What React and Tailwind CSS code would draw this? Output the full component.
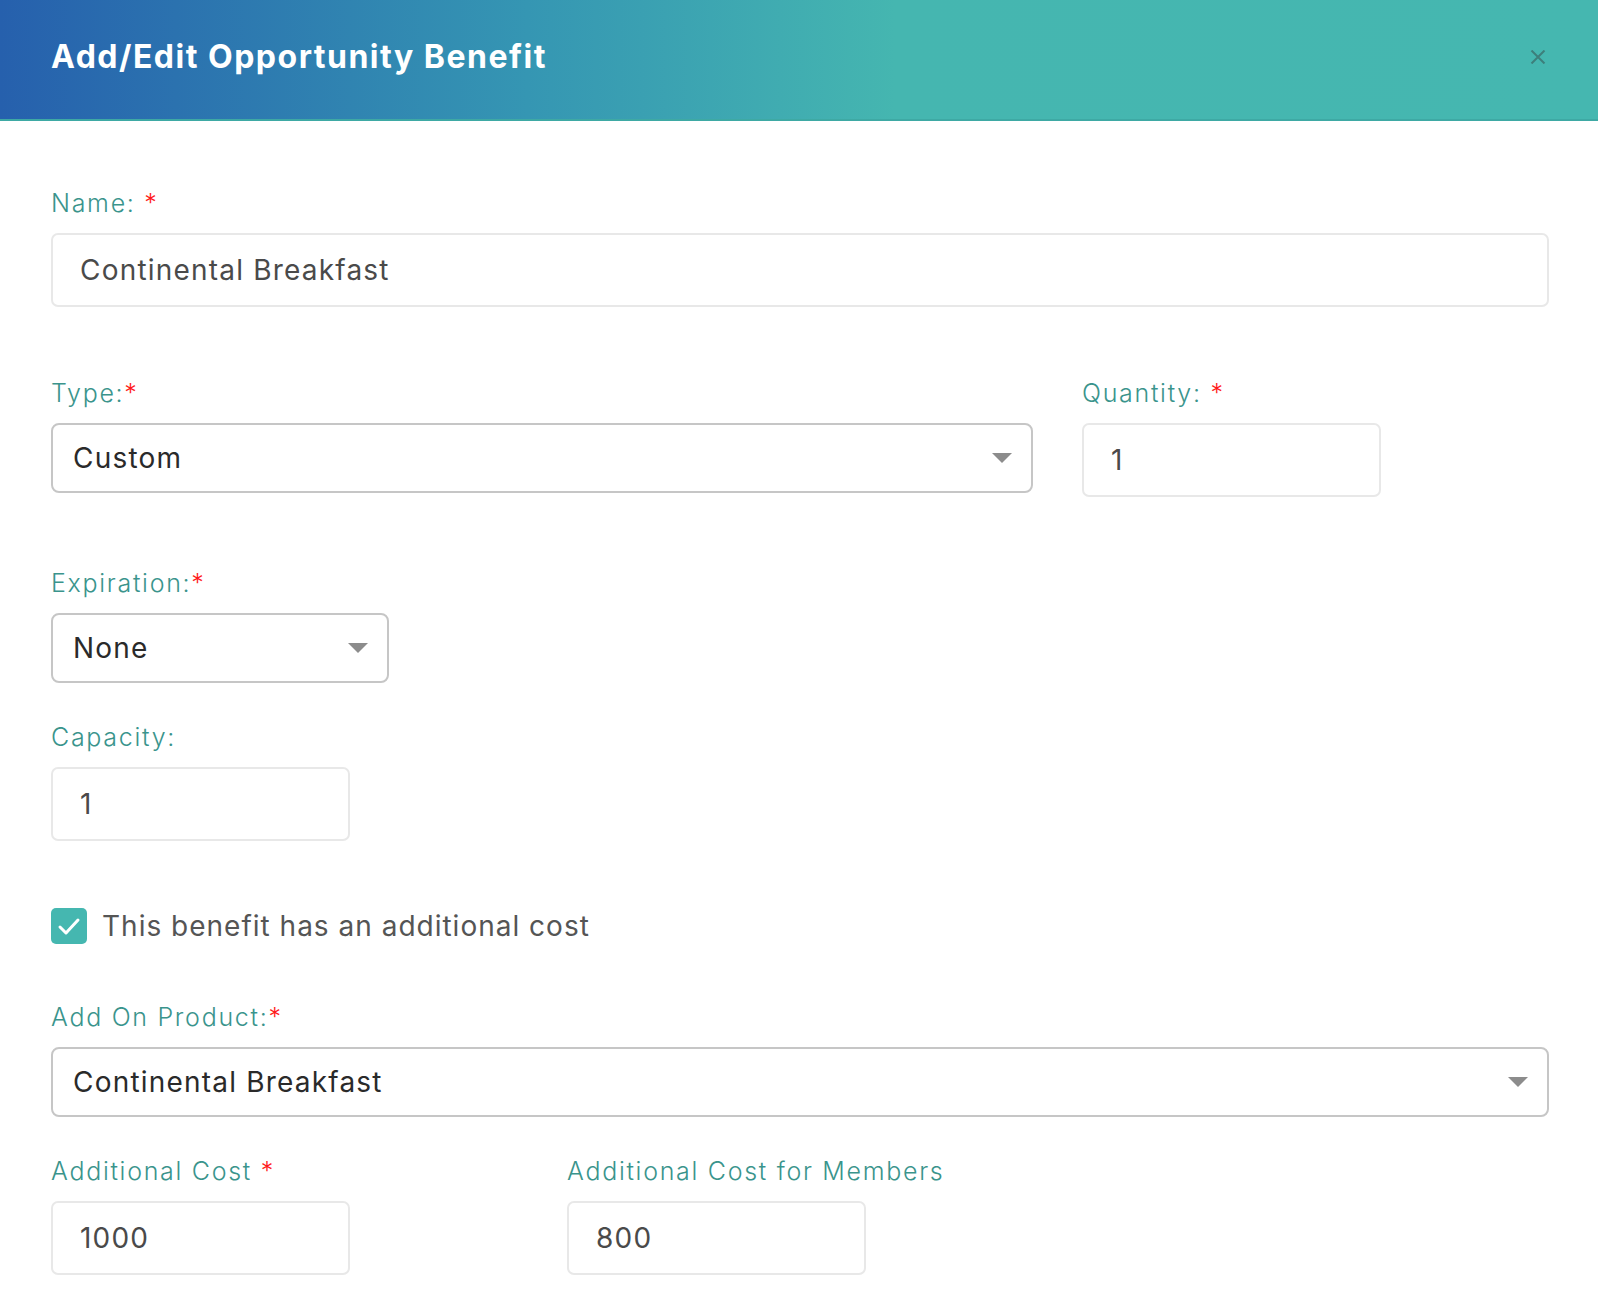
import React from "react";

function Caret() {
  return (
    <svg width="20" height="10" viewBox="0 0 20 10" className="shrink-0">
      <polygon points="0,0 20,0 10,10" fill="#8c8c8c" />
    </svg>
  );
}

function Label({ text, required, spaced }) {
  return (
    <label className="mb-[15px] block whitespace-nowrap text-[25px] font-light leading-[30px] tracking-[1.7px] text-[#3a948c]">
      {text}
      {required ? (
        <span className="text-[#ff1a1a]">{spaced ? " *" : "*"}</span>
      ) : null}
    </label>
  );
}

function TextBox({ value, className = "" }) {
  return (
    <input
      readOnly
      value={value}
      className={`block h-[74px] rounded-[7px] border-2 border-[#e8e8e8] bg-white pl-[27px] text-[28px] tracking-[1.2px] text-[#4a4a4a] outline-none ${className}`}
    />
  );
}

function SelectBox({ value, className = "" }) {
  return (
    <div
      className={`flex h-[70px] items-center justify-between rounded-[8px] border-2 border-[#c6c6c6] bg-white pl-[20px] pr-[19px] text-[28px] tracking-[1.2px] text-[#2a2a2a] ${className}`}
    >
      <span>{value}</span>
      <Caret />
    </div>
  );
}

export default function App() {
  return (
    <div className="min-h-screen bg-white font-['Inter',sans-serif]">
      <header className="flex h-[121px] items-center justify-between border-b-2 border-[#3ea9a4] bg-[linear-gradient(90deg,#2660ad_0%,#3596b3_33%,#45b6b0_56%,#45b7b0_100%)] pb-[6px] pl-[51px] pr-[52px]">
        <h1 className="text-[32px] font-bold leading-[40px] tracking-[1.5px] text-white">Add/Edit Opportunity Benefit</h1>
        <button type="button" className="text-[#3d7f7b]" aria-label="Close">
          <svg width="16" height="14" viewBox="0 0 16 14">
            <path d="M1.5 0.5 L14.5 13.5 M14.5 0.5 L1.5 13.5" stroke="currentColor" strokeWidth="2" />
          </svg>
        </button>
      </header>

      <main className="pb-[39px] pl-[51px] pr-[49px] pt-[67px]">
        <div>
          <Label text="Name:" required spaced />
          <TextBox value="Continental Breakfast" className="w-full" />
        </div>

        <div className="mt-[71px] flex gap-[49px]">
          <div className="w-[982px]">
            <Label text="Type:" required />
            <SelectBox value="Custom" />
          </div>
          <div className="w-[299px]">
            <Label text="Quantity:" required spaced />
            <TextBox value="1" className="w-full" />
          </div>
        </div>

        <div className="mt-[71px]">
          <Label text="Expiration:" required />
          <SelectBox value="None" className="w-[338px]" />
        </div>

        <div className="mt-[39px]">
          <Label text="Capacity:" />
          <TextBox value="1" className="w-[299px]" />
        </div>

        <div className="mt-[67px] flex items-center gap-[15px]">
          <span className="flex h-[36px] w-[36px] items-center justify-center rounded-[5px] bg-[#45b7b0]">
            <svg width="36" height="36" viewBox="0 0 36 36">
              <path d="M9 19 L15 25 L27 12" fill="none" stroke="#fff" strokeWidth="3" strokeLinecap="round" strokeLinejoin="round" />
            </svg>
          </span>
          <span className="text-[28px] leading-[36px] tracking-[1px] text-[#555555]">This benefit has an additional cost</span>
        </div>

        <div className="mt-[58px]">
          <Label text="Add On Product:" required />
          <SelectBox value="Continental Breakfast" className="w-full" />
        </div>

        <div className="mt-[39px] flex gap-[217px]">
          <div className="w-[299px]">
            <Label text="Additional Cost" required spaced />
            <TextBox value="1000" className="w-full" />
          </div>
          <div className="w-[299px]">
            <Label text="Additional Cost for Members" />
            <TextBox value="800" className="w-full" />
          </div>
        </div>
      </main>
    </div>
  );
}
